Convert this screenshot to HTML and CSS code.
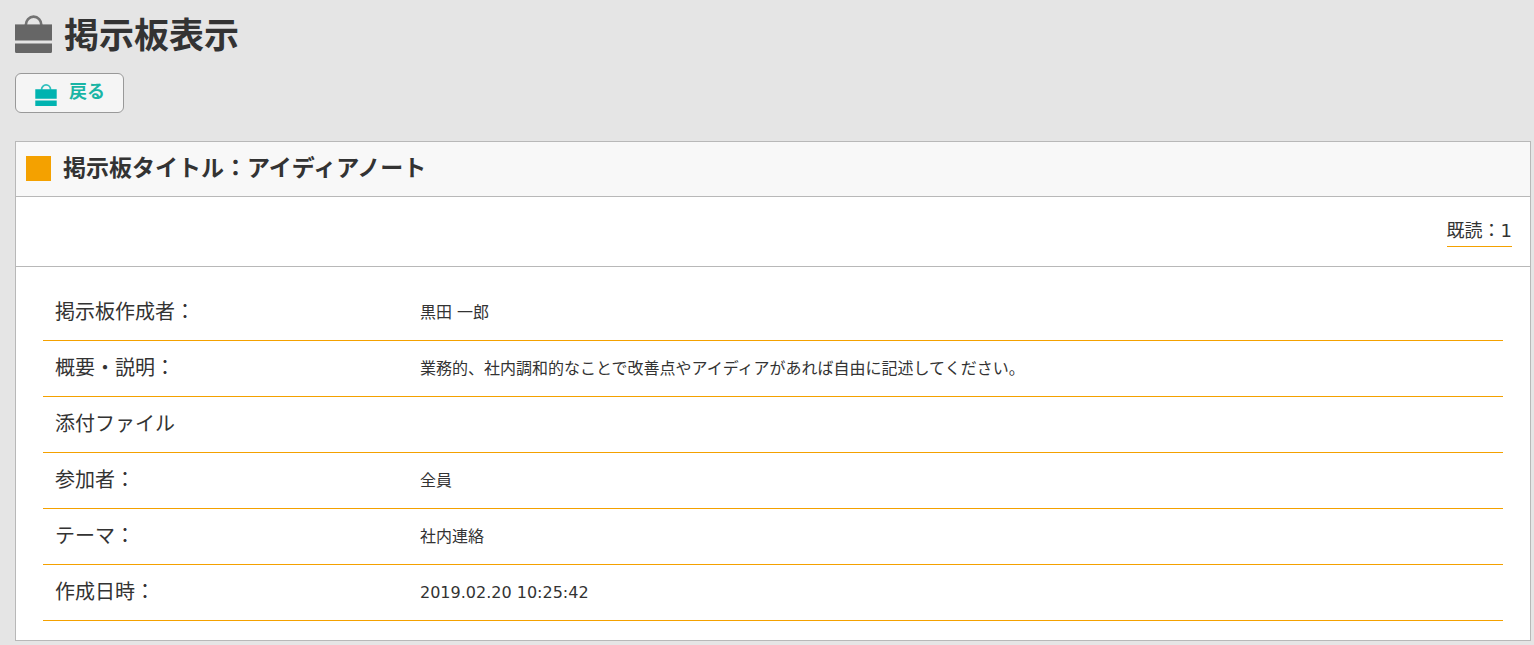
FILE: index.html
```html
<!DOCTYPE html>
<html lang="ja">

<head>
    <meta charset="UTF-8">
    <meta name="viewport" content="width=device-width, initial-scale=1.0">
    <title>掲示板表示</title>
    <link rel="stylesheet" href="styles.css">
</head>

<body>
    <!-- ページタイトル -->
    <header class="page-header">
        <h1>
            <svg class="icon" viewBox="0 0 37 38" aria-hidden="true">
                <path d="M10.800 10a7.800 8.400 0 0 1 15.600 0" fill="none" stroke="currentColor" stroke-width="2.600" opacity=".9" />
                <path d="M0 9h37v1H0z" fill="currentColor" opacity=".6" />
                <path d="M0 10h37v15.500H0zM0 28.500h37v8q0 1.500-1.500 1.500h-34q-1.500 0-1.500-1.500z" fill="currentColor" />
            </svg>
            <span>掲示板表示</span>
        </h1>
        <button type="button" class="back-button" onclick="history.back()">
            <svg class="icon" viewBox="0 0 37 38" aria-hidden="true">
                <path d="M10.800 10a7.800 8.400 0 0 1 15.600 0" fill="none" stroke="currentColor" stroke-width="3" opacity=".8" />
                <path d="M0 9h37v16.500H0zM0 28.500h37v9.500H0z" fill="currentColor" />
            </svg>
            <span>戻る</span>
        </button>
    </header>

    <!-- 掲示板の内容 -->
    <main class="panel">
        <h2>掲示板タイトル：アイディアノート</h2>
        <div class="read-count">
            <a href="#">既読：1</a>
        </div>
        <div class="detail">
            <table>
                <tr>
                    <th scope="row">掲示板作成者：</th>
                    <td>黒田 一郎</td>
                </tr>
                <tr>
                    <th scope="row">概要・説明：</th>
                    <td>業務的、社内調和的なことで改善点やアイディアがあれば自由に記述してください。</td>
                </tr>
                <tr>
                    <th scope="row">添付ファイル</th>
                    <td></td>
                </tr>
                <tr>
                    <th scope="row">参加者：</th>
                    <td>全員</td>
                </tr>
                <tr>
                    <th scope="row">テーマ：</th>
                    <td>社内連絡</td>
                </tr>
                <tr>
                    <th scope="row">作成日時：</th>
                    <td>2019.02.20 10:25:42</td>
                </tr>
            </table>
        </div>
    </main>
</body>

</html>
```
FILE: styles.css
```css
* {
    box-sizing: border-box;
}

body {
    margin: 0;
    padding: 12px 3px 4px 15px;
    background-color: #e5e5e5;
    color: #333;
    font-family: "DejaVu Sans", "Noto Sans CJK JP", sans-serif;
    font-size: 16px;
}

h1 {
    display: flex;
    align-items: center;
    gap: 12px;
    margin: 0 0 17px;
    font-size: 35px;
    line-height: 40px;
}

h1 span {
    padding-top: 4px;
}

h1 .icon {
    width: 37px;
    height: 38px;
    color: #666;
}

.back-button {
    display: flex;
    align-items: center;
    gap: 12px;
    height: 40px;
    padding: 0 18px 0 19px;
    border: 1px solid #999;
    border-radius: 6px;
    background-color: #f5f5f5;
    color: #1ab5a5;
    font-family: inherit;
    font-size: 18px;
    font-weight: bold;
    line-height: 24px;
    cursor: pointer;
}

.back-button span {
    padding-bottom: 2px;
}

.back-button .icon {
    width: 22px;
    height: 22px;
    margin-top: 4px;
    color: #00b3b0;
}

.panel {
    margin-top: 28px;
    border: 1px solid #b8b8b8;
    background-color: #fff;
}

h2 {
    display: flex;
    align-items: center;
    gap: 12px;
    margin: 0;
    padding: 10px 10px 12px;
    border-bottom: 1px solid #b8b8b8;
    background-color: #f8f8f8;
    font-size: 23px;
    line-height: 32px;
}

h2::before {
    content: "";
    width: 25px;
    height: 25px;
    background-color: #f4a100;
}

.read-count {
    display: flex;
    justify-content: flex-end;
    padding: 20px 18px 19px;
    border-bottom: 1px solid #b8b8b8;
}

.read-count a {
    padding-bottom: 1px;
    border-bottom: 1px solid #f4a100;
    color: #333;
    font-size: 18px;
    line-height: 28px;
    text-decoration: none;
}

.detail {
    padding: 18px 27px 19px;
}

table {
    width: 100%;
    table-layout: fixed;
    border-spacing: 0;
}

th,
td {
    height: 56px;
    padding: 0 12px;
    border-bottom: 1px solid #f4a100;
    font-weight: normal;
    line-height: 28px;
    text-align: left;
}

th {
    width: 25%;
    padding-bottom: 2px;
    font-size: 20px;
}
```
